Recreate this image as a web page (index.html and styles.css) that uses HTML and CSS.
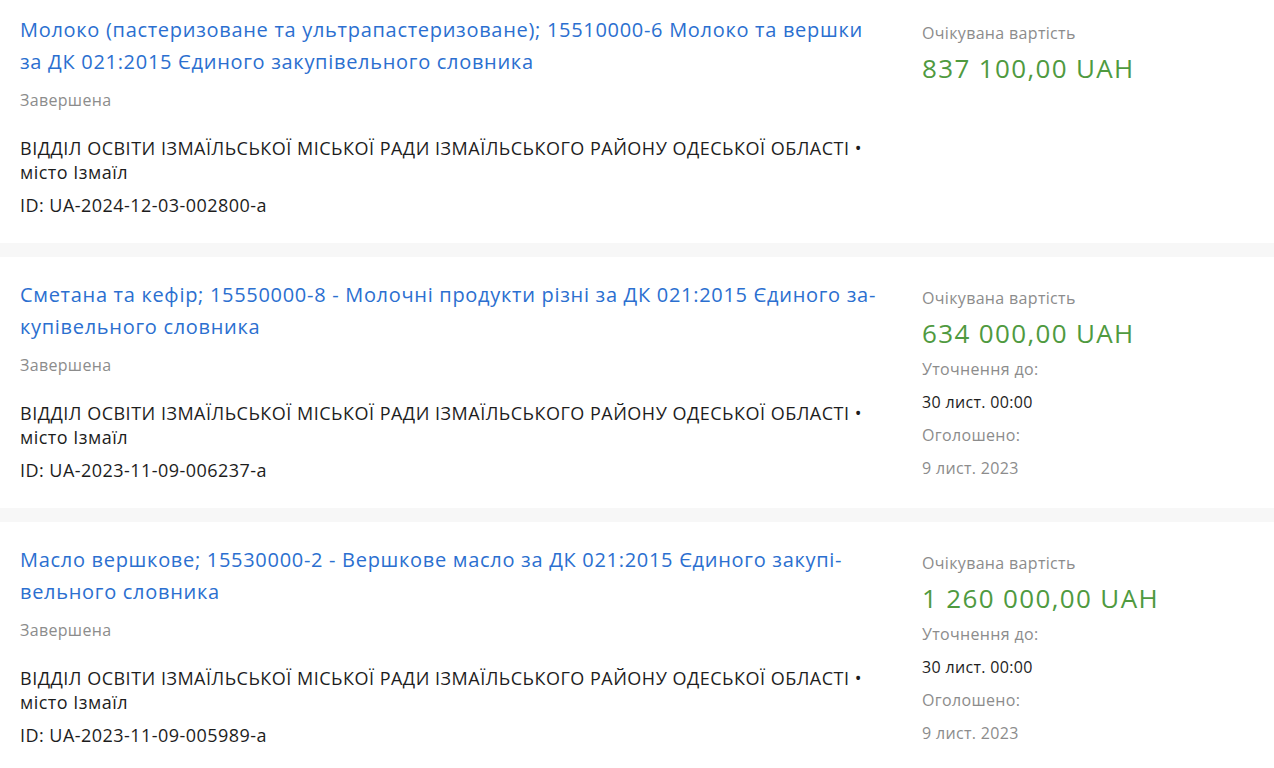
FILE: index.html
```html
<!DOCTYPE html>
<html lang="uk">
  <head>
    <meta charset="UTF-8" />
    <meta name="viewport" content="width=device-width, initial-scale=1.0" />
    <title>Закупівлі</title>
    <link rel="stylesheet" href="styles.css">
  </head>
  <body>
    <div class="tender-list">
      <div class="tender">
        <div class="tender-main">
          <a class="tender-title" href="#">Молоко (пастеризоване та ультрапастеризоване); 15510000-6 Молоко та вершки за ДК 021:2015 Єдиного закупівельного словника</a>
          <div class="tender-status">Завершена</div>
          <div class="tender-org">ВІДДІЛ ОСВІТИ ІЗМАЇЛЬСЬКОЇ МІСЬКОЇ РАДИ ІЗМАЇЛЬСЬКОГО РАЙОНУ ОДЕСЬКОЇ ОБЛАСТІ • місто Ізмаїл</div>
          <div class="tender-id">ID: UA-2024-12-03-002800-a</div>
        </div>
        <div class="tender-side">
          <div class="side-label">Очікувана вартість</div>
          <div class="side-price">837 100,00 UAH</div>
        </div>
      </div>

      <div class="tender">
        <div class="tender-main">
          <a class="tender-title" href="#">Сметана та кефір; 15550000-8 - Молочні продукти різні за ДК 021:2015 Єдиного за&shy;купівельного словника</a>
          <div class="tender-status">Завершена</div>
          <div class="tender-org">ВІДДІЛ ОСВІТИ ІЗМАЇЛЬСЬКОЇ МІСЬКОЇ РАДИ ІЗМАЇЛЬСЬКОГО РАЙОНУ ОДЕСЬКОЇ ОБЛАСТІ • місто Ізмаїл</div>
          <div class="tender-id">ID: UA-2023-11-09-006237-a</div>
        </div>
        <div class="tender-side">
          <div class="side-label">Очікувана вартість</div>
          <div class="side-price">634 000,00 UAH</div>
          <div class="side-label side-gap">Уточнення до:</div>
          <div class="side-value">30 лист. 00:00</div>
          <div class="side-label">Оголошено:</div>
          <div class="side-label">9 лист. 2023</div>
        </div>
      </div>

      <div class="tender">
        <div class="tender-main">
          <a class="tender-title" href="#">Масло вершкове; 15530000-2 - Вершкове масло за ДК 021:2015 Єдиного закупі&shy;вельного словника</a>
          <div class="tender-status">Завершена</div>
          <div class="tender-org">ВІДДІЛ ОСВІТИ ІЗМАЇЛЬСЬКОЇ МІСЬКОЇ РАДИ ІЗМАЇЛЬСЬКОГО РАЙОНУ ОДЕСЬКОЇ ОБЛАСТІ • місто Ізмаїл</div>
          <div class="tender-id">ID: UA-2023-11-09-005989-a</div>
        </div>
        <div class="tender-side">
          <div class="side-label">Очікувана вартість</div>
          <div class="side-price">1 260 000,00 UAH</div>
          <div class="side-label side-gap">Уточнення до:</div>
          <div class="side-value">30 лист. 00:00</div>
          <div class="side-label">Оголошено:</div>
          <div class="side-label">9 лист. 2023</div>
        </div>
      </div>
    </div>
  </body>
</html>
```

FILE: styles.css
```css
body {
  font-family: "Open Sans", "Noto Sans", sans-serif;
  background-color: #f7f7f7;
  color: #1d1d1d;
  margin: 0;
  padding: 0;
}
.tender-list {
  display: flex;
  flex-direction: column;
  gap: 14px;
  margin-top: -8px;
}
.tender {
  display: flex;
  gap: 40px;
  background: #fff;
  padding: 22px 20px 26px 20px;
}
.tender-main {
  flex: 1;
  min-width: 0;
}
.tender-title {
  display: block;
  font-size: 20px;
  line-height: 32px;
  letter-spacing: 0.7px;
  color: #2b6fd0;
  text-decoration: none;
}
.tender-status {
  margin-top: 10px;
  font-size: 16px;
  line-height: 24px;
  letter-spacing: 0.33px;
  color: #8c8c8c;
}
.tender-org {
  margin-top: 24px;
  font-size: 18px;
  line-height: 24px;
  letter-spacing: 0.5px;
}
.tender-id {
  margin-top: 9px;
  font-size: 18px;
  line-height: 24px;
  letter-spacing: 0.46px;
}
.tender-side {
  width: 332px;
  flex-shrink: 0;
  padding-top: 7px;
}
.side-label,
.side-value {
  font-size: 16px;
  line-height: 24px;
  letter-spacing: 0.33px;
  color: #8c8c8c;
  margin-top: 9px;
}
.side-label:first-child {
  margin-top: 0;
}
.side-value {
  color: #1d1d1d;
}
.side-price {
  margin-top: 5px;
  font-size: 26px;
  line-height: 36px;
  letter-spacing: 1.35px;
  color: #4f9a3f;
}
.side-label.side-gap {
  margin-top: 6px;
}
```
